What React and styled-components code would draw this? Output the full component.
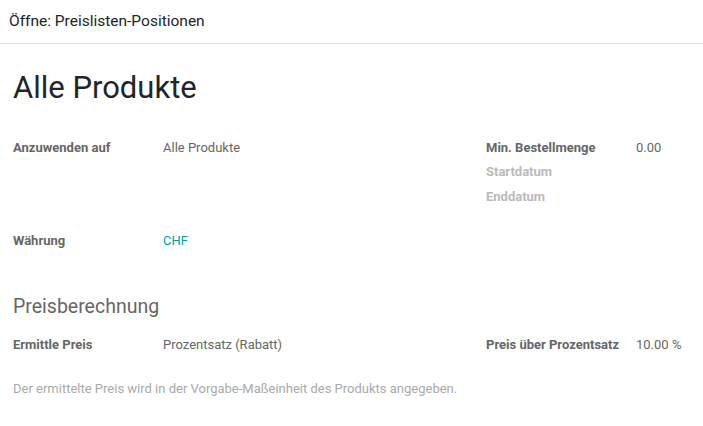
import React from "react";
import styled, { createGlobalStyle } from "styled-components";

const Global = createGlobalStyle`
  html, body { margin: 0; padding: 0; background: #fff; }
  body { font-family: Roboto, "Noto Sans", sans-serif; }
`;

const Header = styled.div`
  height: 44px;
  box-sizing: border-box;
  border-bottom: 1px solid #dee2e6;
  display: flex;
  align-items: center;
  padding: 0 9px 2px;
  font-size: 15.5px;
  color: #212529;
`;

const Sheet = styled.div`
  padding: 26px 13px 0;
`;

const Title = styled.h1`
  margin: 0;
  font-size: 31px;
  font-weight: 400;
  color: #212529;
  line-height: 36px;
`;

const Groups = styled.div`
  display: grid;
  grid-template-columns: 473px 1fr;
  margin-top: ${(p) => p.$top || 0}px;
`;

const Group = styled.div`
  display: flex;
  flex-direction: column;
`;

const Row = styled.div`
  display: grid;
  grid-template-columns: 150px 1fr;
  height: 24.5px;
  align-items: center;
  font-size: 13px;
`;

const Label = styled.div`
  font-weight: 700;
  color: ${(p) => (p.$muted ? "#bbbbbb" : "#666666")};
`;

const Value = styled.div`
  color: ${(p) => (p.$link ? "#00a09d" : "#666666")};
`;

const Section = styled.h2`
  margin: 42px 0 0;
  font-size: 19.5px;
  font-weight: 400;
  color: #666666;
  line-height: 24px;
`;

const Help = styled.div`
  margin-top: 24px;
  font-size: 13px;
  color: #aaaaaa;
`;

export default function App() {
  return (
    <>
      <Global />
      <Header>Öffne: Preislisten-Positionen</Header>
      <Sheet>
        <Title>Alle Produkte</Title>
        <Groups $top={29}>
          <Group>
            <Row>
              <Label>Anzuwenden auf</Label>
              <Value>Alle Produkte</Value>
            </Row>
          </Group>
          <Group>
            <Row>
              <Label>Min. Bestellmenge</Label>
              <Value>0.00</Value>
            </Row>
            <Row>
              <Label $muted>Startdatum</Label>
              <Value />
            </Row>
            <Row>
              <Label $muted>Enddatum</Label>
              <Value />
            </Row>
          </Group>
        </Groups>
        <Groups $top={20}>
          <Group>
            <Row>
              <Label>Währung</Label>
              <Value $link>CHF</Value>
            </Row>
          </Group>
        </Groups>
        <Section>Preisberechnung</Section>
        <Groups $top={13}>
          <Group>
            <Row>
              <Label>Ermittle Preis</Label>
              <Value>Prozentsatz (Rabatt)</Value>
            </Row>
          </Group>
          <Group>
            <Row>
              <Label>Preis über Prozentsatz</Label>
              <Value>10.00 %</Value>
            </Row>
          </Group>
        </Groups>
        <Help>Der ermittelte Preis wird in der Vorgabe-Maßeinheit des Produkts angegeben.</Help>
      </Sheet>
    </>
  );
}
